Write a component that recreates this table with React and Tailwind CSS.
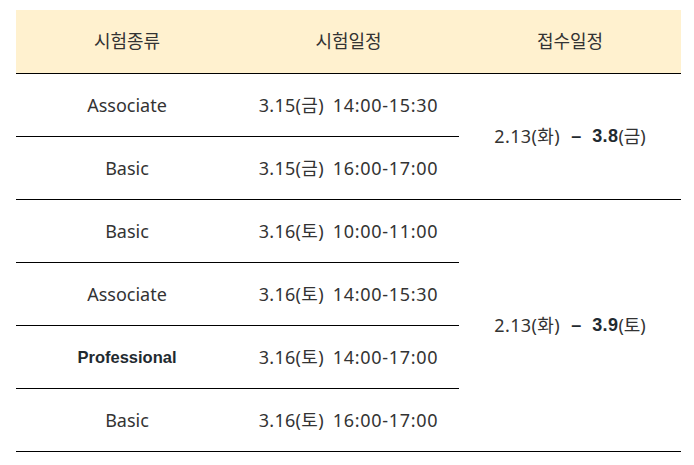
import React from "react";

const font = { fontFamily: '"Noto Sans", "Noto Sans CJK KR", sans-serif' };

function Cell({ children, className = "" }) {
  return (
    <div
      className={
        "flex items-center justify-center border-b border-black text-[18px] text-[#333] " +
        className
      }
    >
      {children}
    </div>
  );
}

function When({ date, time }) {
  return (
    <span className="flex items-center gap-[9px]">
      <span className="tracking-[0.3px]">{date}</span>
      <span className="tracking-[0.7px]">{time}</span>
    </span>
  );
}

function Range({ end, day }) {
  return (
    <span className="flex items-center">
      <span className="tracking-[0.4px]">2.13(화)</span>
      <span className="mx-[11px] font-bold font-['Liberation_Sans'] text-[#1f2a30]">–</span>
      <span className="font-bold font-['Liberation_Sans'] text-[#1f2a30] tracking-[0.4px]">{end}</span>
      <span>({day})</span>
    </span>
  );
}

export default function App() {
  return (
    <div className="bg-white w-[694px] h-[465px] pt-[10px] pl-[16px]" style={font}>
      <div className="grid w-[665px] grid-cols-[222px_221px_222px] grid-rows-[64px_repeat(6,63px)]">
        <Cell className="bg-[#fff1cf] text-[#222]">시험종류</Cell>
        <Cell className="bg-[#fff1cf] text-[#222]">시험일정</Cell>
        <Cell className="bg-[#fff1cf] text-[#222]">접수일정</Cell>

        <Cell className="col-start-1 row-start-2">Associate</Cell>
        <Cell className="col-start-2 row-start-2">
          <When date="3.15(금)" time="14:00-15:30" />
        </Cell>
        <Cell className="col-start-3 row-start-2 row-span-2">
          <Range end="3.8" day="금" />
        </Cell>

        <Cell className="col-start-1 row-start-3">Basic</Cell>
        <Cell className="col-start-2 row-start-3">
          <When date="3.15(금)" time="16:00-17:00" />
        </Cell>

        <Cell className="col-start-1 row-start-4">Basic</Cell>
        <Cell className="col-start-2 row-start-4">
          <When date="3.16(토)" time="10:00-11:00" />
        </Cell>
        <Cell className="col-start-3 row-start-4 row-span-4">
          <Range end="3.9" day="토" />
        </Cell>

        <Cell className="col-start-1 row-start-5">Associate</Cell>
        <Cell className="col-start-2 row-start-5">
          <When date="3.16(토)" time="14:00-15:30" />
        </Cell>

        <Cell className="col-start-1 row-start-6">
          <span className="font-['Liberation_Sans'] font-bold text-[16.5px] text-[#1f2a30]">Professional</span>
        </Cell>
        <Cell className="col-start-2 row-start-6">
          <When date="3.16(토)" time="14:00-17:00" />
        </Cell>

        <Cell className="col-start-1 row-start-7">Basic</Cell>
        <Cell className="col-start-2 row-start-7">
          <When date="3.16(토)" time="16:00-17:00" />
        </Cell>
      </div>
    </div>
  );
}
